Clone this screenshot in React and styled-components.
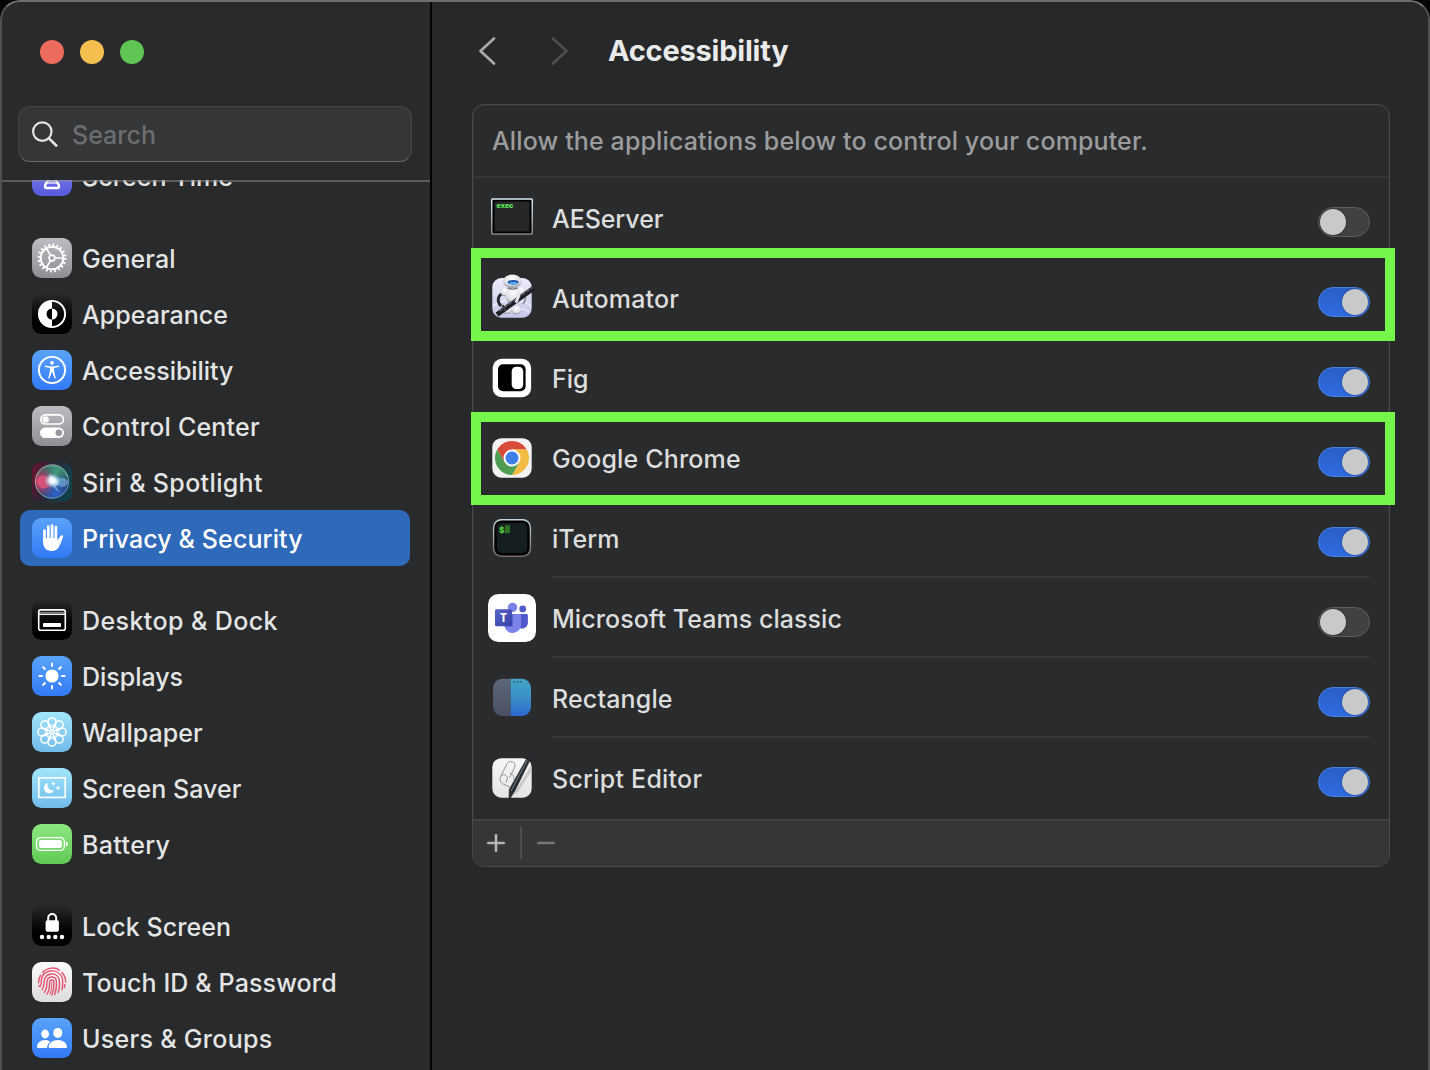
import React from "react";
import styled, { createGlobalStyle, css } from "styled-components";

const GlobalStyle = createGlobalStyle`
  *, *::before, *::after { box-sizing: border-box; }
  body {
    margin: 0;
    background: #050505;
    overflow: hidden;
    font-family: Inter, "Liberation Sans", sans-serif;
  }
`;

const Window = styled.div`
  position: relative;
  display: flex;
  width: 1430px;
  height: 1070px;
  overflow: hidden;
  border-radius: 20px 20px 0 0;
  background: #27282a;

  &::after {
    content: "";
    position: absolute;
    inset: 0;
    border: 2px solid #4f5052;
    border-top-color: #6d6e70;
    border-bottom: 0;
    border-radius: 20px 20px 0 0;
    pointer-events: none;
  }
`;

const Sidebar = styled.aside`
  display: flex;
  flex-direction: column;
  flex: none;
  width: 432px;
  height: 100%;
  border-right: 2px solid #000;
  background: #292a2c;
`;

const SidebarHeader = styled.div`
  display: flex;
  flex-direction: column;
  flex: none;
  gap: 42px;
  height: 180px;
  padding: 40px 18px 0;
`;

const TrafficLights = styled.div`
  display: flex;
  gap: 16px;
  padding-left: 22px;
`;

const Light = styled.span`
  width: 24px;
  height: 24px;
  border-radius: 50%;
  background: ${(p) => p.$color};
`;

const SearchField = styled.div`
  display: flex;
  align-items: center;
  gap: 14px;
  height: 56px;
  padding: 0 13px;
  border: 1px solid #454648;
  border-bottom-color: #6a6b6d;
  border-radius: 12px;
  background: #353638;
  color: #6c6d6f;
`;

const ListViewport = styled.div`
  position: relative;
  flex: 1;
  overflow: hidden;

  &::after {
    content: "";
    position: absolute;
    inset: 0 0 auto 0;
    height: 2px;
    background: rgba(140, 142, 144, 0.5);
  }
`;

const NavList = styled.nav`
  display: flex;
  flex-direction: column;
  gap: 26px;
  margin-top: -32px;
  padding: 0 20px;
`;

const NavGroup = styled.div`
  display: flex;
  flex-direction: column;
`;

const NavItem = styled.div`
  display: flex;
  align-items: center;
  gap: 10px;
  height: 56px;
  padding-left: 12px;
  border-radius: 10px;
  color: ${(p) => (p.$active ? "#ffffff" : "#e4e5e5")};
  background: ${(p) => (p.$active ? "#2f69ba" : "transparent")};
`;

const Label = styled.span`
  padding-top: 2px;
  white-space: nowrap;
  font-size: 25px;
  font-weight: 450;
  line-height: 32px;
  letter-spacing: ${(p) => p.$track || 0}px;
`;

const Main = styled.main`
  flex: 1;
  display: flex;
  flex-direction: column;
  min-width: 0;
  padding: 0 40px 0 40px;
`;

const TitleBar = styled.header`
  display: flex;
  align-items: center;
  height: 104px;
  padding: 0 0 2px 6px;
`;

const Title = styled.h1`
  margin: 0 0 1px 39px;
  color: #e9eaea;
  font-size: 29px;
  font-weight: 650;
  line-height: 36px;
  letter-spacing: -0.22px;
`;

const Chevron = styled.svg`
  flex: none;
  width: 18px;
  height: 30px;
  margin-right: ${(p) => p.$gap || 0}px;
  fill: none;
  stroke: ${(p) => p.$color};
  stroke-width: 2.7;
  stroke-linecap: round;
  stroke-linejoin: round;
`;

const Panel = styled.section`
  display: flex;
  flex-direction: column;
  width: 918px;
  height: 763px;
  border: 1px solid #48494b;
  border-radius: 12px;
  background: #2a2b2d;
  box-shadow: inset 0 0 0 1px #323335;
`;

const Description = styled.div`
  display: flex;
  align-items: center;
  height: 73px;
  padding: 0 0 2px 19px;
  border-bottom: 2px solid #343537;
  color: #9b9c9d;
`;

const AppRow = styled.div`
  position: relative;
  display: flex;
  align-items: center;
  height: ${(p) => (p.$last ? 81 : 80)}px;
  padding: ${(p) => (p.$last ? "0 19px 1px 15px" : "0 19px 0 15px")};
  color: #dcdddd;

  ${(p) =>
    p.$highlight !== undefined &&
    css`
      &::after {
        content: "";
        position: absolute;
        left: -2px;
        top: ${p.$highlight}px;
        width: 924px;
        height: 93px;
        border: 10px solid #74f64b;
        z-index: 2;
      }
    `}
`;

const AppIcon = styled.svg`
  flex: none;
  width: 48px;
  height: 48px;
`;

const AppBody = styled.div`
  display: flex;
  align-items: center;
  justify-content: space-between;
  flex: 1;
  height: 80px;
  margin-left: 16px;
  padding-top: 2px;
  border-bottom: 2px solid ${(p) => (p.$last ? "transparent" : "#353638")};
`;

const Switch = styled.span`
  display: flex;
  align-items: center;
  justify-content: ${(p) => (p.$on ? "flex-end" : "flex-start")};
  width: 52px;
  height: 30px;
  margin-top: 8px;
  padding: 0 1px;
  border: 1px solid ${(p) => (p.$on ? "#4a80e2" : "#5b5c5e")};
  border-radius: 15px;
  background: ${(p) => (p.$on ? "linear-gradient(#295fc6, #306be0)" : "#404143")};

  &::before {
    content: "";
    width: 26px;
    height: 26px;
    border-radius: 50%;
    background: #c8c9c9;
    box-shadow: 0 0 2px rgba(0, 0, 0, 0.5);
  }
`;

const PanelFooter = styled.footer`
  display: flex;
  align-items: center;
  flex: 1;
  padding-bottom: 2px;
  border-top: 2px solid #424345;
  border-radius: 0 0 11px 11px;
  background: #353638;
`;

const FooterButton = styled.span`
  display: flex;
  align-items: center;
  justify-content: center;
  width: ${(p) => p.$width}px;
  height: 32px;
  color: ${(p) => p.$color};
  padding-right: ${(p) => (p.$divided ? 1 : 0)}px;
  border-right: ${(p) => (p.$divided ? "2px solid #4d4e50" : "0")};
`;

/* ---------- sidebar icons ---------- */

const TileSvg = styled.svg`
  flex: none;
  width: 40px;
  height: 40px;
  overflow: visible;
`;

const TILES = {
  gray: ["#bdbcc1", "#929197"],
  black: ["#272829", "#000000"],
  blue: ["#5aa3f9", "#347cf6"],
  sky: ["#a2e6fa", "#72bdec"],
  green: ["#8ce681", "#62cc57"],
  white: ["#fbfbfb", "#dedede"],
  indigo: ["#8a86f7", "#5a5cde"],
};

function Tile({ tone, children }) {
  const [a, b] = TILES[tone];
  const id = "tile-" + tone;
  return (
    <TileSvg viewBox="0 0 40 40" fill="none" stroke="#fff">
      <defs>
        <linearGradient id={id} x1="0" y1="0" x2="0" y2="1">
          <stop offset="0" stopColor={a} />
          <stop offset={tone === "black" ? "0.65" : "0.95"} stopColor={b} />
        </linearGradient>
      </defs>
      <rect width="40" height="40" rx="9.5" fill={`url(#${id})`} stroke="none" />
      {children}
    </TileSvg>
  );
}

const ScreenTimeIcon = () => (
  <Tile tone="indigo">
    <path
      d="M13 8h14M14.500 8c0 7 4 9 4 12s-5.500 6-5.500 10.500c0 1.200.6 1.500 1.500 1.500h11c.9 0 1.500-.3 1.500-1.500 0-4.500-5.500-7.500-5.500-10.500s4-5 4-12"
      strokeWidth="2.400"
      strokeLinecap="round"
      strokeLinejoin="round"
    />
    <path d="M20 20.500c-1 4-4 5-5.500 7.500h11c-1.500-2.500-4.500-3.500-5.500-7.500z" fill="#fff" stroke="none" opacity="0.600" />
  </Tile>
);

const GearIcon = () => (
  <Tile tone="gray">
    <circle cx="20" cy="20" r="11.300" strokeWidth="1.900" />
    <circle cx="20" cy="20" r="13.300" strokeWidth="2.300" strokeDasharray="1.900 2.278" />
    <circle cx="20" cy="20" r="2.900" strokeWidth="1.600" />
    <path d="M23 20h8.500M18.500 17.400l-4.300-7.400M18.500 22.600l-4.300 7.400" strokeWidth="1.700" />
  </Tile>
);

const AppearanceIcon = () => (
  <Tile tone="black">
    <circle cx="20" cy="20" r="13.100" strokeWidth="1.900" />
    <path d="M20 7a13 13 0 0 0 0 26z" fill="#fff" stroke="none" />
    <path d="M20 14.500a5.500 5.500 0 0 0 0 11z" fill="#000" stroke="none" />
    <path d="M20 14.500a5.500 5.500 0 0 1 0 11z" fill="#fff" stroke="none" />
  </Tile>
);

const AccessibilityIcon = () => (
  <Tile tone="blue">
    <circle cx="20" cy="20" r="13.100" strokeWidth="1.900" />
    <circle cx="20" cy="12.800" r="1.900" fill="#fff" stroke="none" />
    <path d="M13.500 16.200l4.900 1h3.200l4.900-1" strokeWidth="1.600" strokeLinecap="round" strokeLinejoin="round" />
    <path d="M17.900 16.800h4.200v4.200l1.700 7.200-1.300.4-2.300-6.600h-.4l-2.300 6.600-1.300-.4 1.700-7.200z" fill="#fff" stroke="none" />
  </Tile>
);

const ControlCenterIcon = () => (
  <Tile tone="gray">
    <rect x="8.800" y="8.800" width="22.600" height="9.200" rx="4.600" strokeWidth="1.700" />
    <circle cx="13.600" cy="13.400" r="3.200" fill="#fff" stroke="none" />
    <rect x="8" y="21.500" width="24" height="10.600" rx="5.300" fill="#fff" stroke="none" />
    <circle cx="26.800" cy="26.800" r="3.300" fill="#97969b" stroke="none" />
  </Tile>
);

const SiriIcon = () => (
  <TileSvg viewBox="0 0 40 40">
    <defs>
      <linearGradient id="siri-bg" x1="0" y1="0" x2="1" y2="0.3">
        <stop offset="0" stopColor="#6b1430" />
        <stop offset="0.45" stopColor="#2b2336" />
        <stop offset="1" stopColor="#124049" />
      </linearGradient>
      <radialGradient id="siri-green" cx="0.62" cy="0.2" r="0.6">
        <stop offset="0" stopColor="#3f9d7e" />
        <stop offset="1" stopColor="#3f9d7e" stopOpacity="0" />
      </radialGradient>
      <radialGradient id="siri-pink" cx="0.12" cy="0.5" r="0.5">
        <stop offset="0" stopColor="#d8456f" />
        <stop offset="1" stopColor="#d8456f" stopOpacity="0" />
      </radialGradient>
      <radialGradient id="siri-blue" cx="0.6" cy="0.85" r="0.6">
        <stop offset="0" stopColor="#2d64c8" />
        <stop offset="1" stopColor="#2d64c8" stopOpacity="0" />
      </radialGradient>
      <radialGradient id="siri-glow">
        <stop offset="0" stopColor="#fff" />
        <stop offset="0.35" stopColor="#eaf8fb" stopOpacity="0.95" />
        <stop offset="1" stopColor="#9bd0e8" stopOpacity="0" />
      </radialGradient>
      <linearGradient id="siri-ring" x1="0" y1="0" x2="1" y2="1">
        <stop offset="0" stopColor="#d87c8c" />
        <stop offset="0.5" stopColor="#79c9ac" />
        <stop offset="1" stopColor="#5a8fe0" />
      </linearGradient>
    </defs>
    <rect width="40" height="40" rx="9.500" fill="url(#siri-bg)" />
    <circle cx="20" cy="19.500" r="17" fill="#2a3050" />
    <circle cx="20" cy="19.500" r="17" fill="url(#siri-green)" />
    <circle cx="20" cy="19.500" r="17" fill="url(#siri-blue)" />
    <circle cx="20" cy="19.500" r="17" fill="url(#siri-pink)" />
    <path d="M21 20c5-5 11-6 15-1 0 7-9 8-15 1z" fill="#6fa8dc" opacity="0.700" />
    <path d="M5 20c1-8 9-9 16 0-6 9-14 8-16 0z" fill="#e4557f" opacity="0.750" />
    <path d="M20 18l8 13-9-8-3 8z" fill="#a9c8ff" opacity="0.600" />
    <path d="M17 12l5 3 5 5-2 4-8-3z" fill="#e6f8f4" opacity="0.500" />
    <ellipse cx="20.500" cy="18.500" rx="8.500" ry="7.500" fill="url(#siri-glow)" />
    <circle cx="20" cy="19.500" r="16.700" fill="none" stroke="url(#siri-ring)" strokeWidth="0.900" />
    <path d="M5 14A16 16 0 0 1 35 15" fill="none" stroke="#62b598" strokeWidth="0.700" />
  </TileSvg>
);

const HandIcon = () => (
  <Tile tone="blue">
    <path d="M12.500 12.500v10M16.300 8.700v12M20.100 7.700v12M23.900 9v13" strokeWidth="2.700" strokeLinecap="round" />
    <path
      d="M11.150 20h14.100v2.500l3.300-4.600c.9-1.200 2.900-.5 2.400 1.100-.9 2.700-1.800 5.400-3 8-1.600 3.700-3.800 6-8.100 6-5.500 0-8.700-3.300-8.700-9z"
      fill="#fff"
      stroke="none"
    />
  </Tile>
);

const DesktopIcon = () => (
  <Tile tone="black">
    <rect x="6.700" y="9.900" width="26.600" height="20.400" rx="2" strokeWidth="1.600" />
    <path d="M7 12.600h26" strokeWidth="1.400" opacity="0.450" />
    <path d="M7 14.300h26" strokeWidth="1.300" />
    <rect x="11" y="23" width="18" height="4" rx="0.800" fill="#fff" stroke="none" />
  </Tile>
);

const SunIcon = () => (
  <Tile tone="blue">
    <circle cx="20" cy="20" r="6.600" fill="#fff" stroke="none" />
    {[0, 45, 90, 135, 180, 225, 270, 315].map((a) => (
      <path key={a} d="M20 10v-2.600" strokeWidth="2" strokeLinecap="round" transform={`rotate(${a} 20 20)`} />
    ))}
  </Tile>
);

const FlowerIcon = () => (
  <Tile tone="sky">
    {[0, 45, 90, 135, 180, 225, 270, 315].map((a) => (
      <g key={a} transform={`rotate(${a} 20 20)`}>
        <path d="M17.500 16.500C17.200 14 16 12.500 16 9.900a4 4 0 0 1 8 0C24 12.500 22.800 14 22.500 16.500" strokeWidth="1.500" />
        <ellipse cx="20" cy="16" rx="1.700" ry="3" strokeWidth="0.900" />
      </g>
    ))}
  </Tile>
);

const ScreenSaverIcon = () => (
  <Tile tone="sky">
    <rect x="6.800" y="9.800" width="26.400" height="19.600" strokeWidth="1.600" />
    <path d="M15.800 14.900a5.300 5.300 0 1 0 6.300 7.300 5.400 5.400 0 0 1-6.300-7.300z" fill="#fff" stroke="none" />
    <path
      d="M21.300 13.300l.7 1.700 1.700.7-1.700.7-.7 1.700-.7-1.700-1.700-.7 1.700-.7zM26 17.300l.8 1.900 1.900.8-1.900.8-.8 1.900-.8-1.900-1.900-.8 1.900-.8z"
      fill="#fff"
      stroke="none"
    />
  </Tile>
);

const BatteryIcon = () => (
  <Tile tone="green">
    <rect x="4.600" y="13.600" width="27.800" height="12.800" rx="4.200" strokeWidth="1.400" />
    <rect x="7" y="16" width="23" height="8" rx="2.200" fill="#fff" stroke="none" />
    <path d="M34 17.600c2.600.8 2.600 4 0 4.800z" fill="#fff" stroke="none" />
  </Tile>
);

const LockIcon = () => (
  <Tile tone="black">
    <path d="M16.200 15v-3a4 4 0 0 1 8 0v3" strokeWidth="2" />
    <rect x="13.600" y="14.300" width="13.300" height="11.500" rx="1.800" fill="#fff" stroke="none" />
    {[10, 16.700, 23.300, 30].map((x) => (
      <circle key={x} cx={x} cy="31" r="2.200" fill="#fff" stroke="none" />
    ))}
  </Tile>
);

const FingerprintIcon = () => (
  <Tile tone="white">
    <g stroke="#e2536e" strokeWidth="1.400" strokeLinecap="round">
      <path d="M10.500 10.500C15.500 5 23.500 5 27.500 8.300M30 10.500c2.300 2.600 3.700 6 3.600 9.500" />
      <path d="M8.500 13.300c-1.500 2.500-2 5-1.900 7.500M7 23.500c.3.800.5 1.200.9 1.300 1.600-1.500 1.200-4 1.400-6C10 7.500 25 5.500 29.700 14.500c1.500 3 1.300 7.500.3 13.500M32.900 22.500l-.5 3" />
      <path d="M10 27.600c2.300-2.600 1.800-5.600 2.100-8.300C13 10.300 24.500 9.500 27 17c.9 3.500.4 9-.8 13.500" />
      <path d="M12.300 30.200c3-3.500 2.400-7.200 2.600-10.200.5-6.500 8.500-6.500 9.400-1 .6 4.500-.2 9.300-1.600 13.500" />
      <path d="M15 32.200c2.800-4 2.500-8.200 2.600-12 .3-3 4-3 4.300 0 .2 4.500-.4 8.800-2.200 13" />
      <path d="M19.800 20.500c0 4-.3 8-1.800 11.500" strokeWidth="1" />
    </g>
  </Tile>
);

const UsersIcon = () => (
  <Tile tone="blue">
    <ellipse cx="13.100" cy="16" rx="3.900" ry="4.400" fill="#fff" stroke="none" />
    <path d="M5 29c0-4 3.500-7 8-7 2.200 0 4 .6 5.200 1.700-2 1.400-3 3.700-3.100 6.300H6c-.7 0-1-.4-1-1z" fill="#fff" stroke="none" />
    <ellipse cx="25.800" cy="14.900" rx="4.500" ry="5" fill="#fff" stroke="none" />
    <path d="M16.600 28.800c0-3.800 4-6.900 9.200-6.900s9.200 3.100 9.200 6.900c0 .8-.4 1.200-1.200 1.200h-16c-.8 0-1.200-.4-1.200-1.200z" fill="#fff" stroke="none" />
  </Tile>
);

/* ---------- application icons ---------- */

const ExecIcon = () => (
  <AppIcon viewBox="0 0 48 48">
    <defs>
      <linearGradient id="exec-frame" x1="0" y1="0" x2="0" y2="1">
        <stop offset="0" stopColor="#d6e6ee" />
        <stop offset="1" stopColor="#858687" />
      </linearGradient>
    </defs>
    <rect x="3" y="4.200" width="42" height="36.600" rx="1.500" fill="url(#exec-frame)" />
    <rect x="4.500" y="5.800" width="39" height="33.500" fill="#000" />
    <rect x="6.500" y="7.500" width="35" height="30" fill="#262728" />
    <text x="8.500" y="14.300" fill="#66ee62" stroke="#66ee62" strokeWidth="0.200" fontFamily='"Liberation Mono", monospace' fontWeight="700" fontSize="7">
      exec
    </text>
  </AppIcon>
);

const AutomatorIcon = () => (
  <AppIcon viewBox="0 0 48 48">
    <defs>
      <linearGradient id="auto-bg" x1="0" y1="0" x2="0" y2="1">
        <stop offset="0" stopColor="#ececf9" />
        <stop offset="1" stopColor="#c6c6ea" />
      </linearGradient>
      <radialGradient id="auto-shell" cx="0.5" cy="0.3" r="0.7">
        <stop offset="0" stopColor="#fff" />
        <stop offset="0.7" stopColor="#dcdde2" />
        <stop offset="1" stopColor="#85868d" />
      </radialGradient>
    </defs>
    <rect x="4.300" y="4" width="39.400" height="39.700" rx="9" fill="url(#auto-bg)" />
    <path d="M5 32c10-8 28-8 38 0M8 38c9-6 24-6 33 0" fill="none" stroke="#fff" strokeWidth="1.200" opacity="0.700" />
    <ellipse cx="19" cy="35.500" rx="5" ry="4.500" fill="url(#auto-shell)" />
    <ellipse cx="28.500" cy="36" rx="4.500" ry="4.500" fill="url(#auto-shell)" />
    <path d="M15 19c-6 3-6 9-2 13" fill="none" stroke="#26272c" strokeWidth="2.800" />
    <path d="M36 19c2 2 2 8-1 11" fill="none" stroke="#8a8b93" strokeWidth="1.600" />
    <ellipse cx="17" cy="18" rx="4.500" ry="4.200" fill="url(#auto-shell)" />
    <ellipse cx="33" cy="17.500" rx="4.500" ry="4" fill="url(#auto-shell)" />
    <ellipse cx="25" cy="21.500" rx="7.500" ry="8.500" fill="url(#auto-shell)" />
    <path d="M19.500 13.800c3 1.500 7 1.500 10 0" fill="none" stroke="#6d6e76" strokeWidth="1.300" />
    <ellipse cx="24.300" cy="7.300" rx="9.300" ry="6.700" fill="url(#auto-shell)" />
    <ellipse cx="25.200" cy="8.300" rx="5.500" ry="2.400" fill="#2256a8" />
    <ellipse cx="25.500" cy="9.200" rx="4.200" ry="1.300" fill="#5fb0f2" />
    <path d="M9 40.500L46 14" stroke="#1e1f24" strokeWidth="4.800" />
    <path d="M11.500 37.200L44.500 13.600" stroke="#8a8c95" strokeWidth="0.900" strokeDasharray="4 1.500" />
    <path d="M31 21l-2.500 6.500" stroke="#e4e5ea" strokeWidth="3" strokeLinecap="round" />
    <path d="M15 32l2 4" stroke="#3a3b40" strokeWidth="2.500" strokeLinecap="round" />
  </AppIcon>
);

const FigIcon = () => (
  <AppIcon viewBox="0 0 48 48">
    <rect x="4.700" y="4.800" width="38.400" height="38.400" rx="9" fill="#fff" />
    <rect x="10" y="10.300" width="27.600" height="27" rx="5" fill="#000" />
    <rect x="23.700" y="12.700" width="11.500" height="22.300" rx="4.500" fill="#fff" />
  </AppIcon>
);

const ChromeIcon = () => (
  <AppIcon viewBox="0 0 48 48">
    <rect x="4.300" y="4.200" width="39.400" height="39.500" rx="9" fill="#f2f2f2" />
    <path d="M24 15.500h14.720A17 17 0 0 0 9.280 15.500L16.640 28.250z" fill="#d94a3a" />
    <path d="M31.360 28.250L24 41A17 17 0 0 0 38.720 15.500H24z" fill="#f2bd42" />
    <path d="M16.640 28.250L9.280 15.500A17 17 0 0 0 24 41l7.360-12.750z" fill="#4f9d52" />
    <circle cx="24" cy="24" r="8.500" fill="#fff" />
    <circle cx="24" cy="24" r="6.500" fill="#3f7ee8" />
  </AppIcon>
);

const ITermIcon = () => (
  <AppIcon viewBox="0 0 48 48">
    <defs>
      <linearGradient id="iterm-frame" x1="0" y1="0" x2="0" y2="1">
        <stop offset="0" stopColor="#c5d3da" />
        <stop offset="1" stopColor="#6f6d6d" />
      </linearGradient>
    </defs>
    <rect x="4.900" y="5" width="38.200" height="38" rx="8.500" fill="url(#iterm-frame)" />
    <rect x="6.300" y="6.400" width="35.400" height="35.200" rx="7.300" fill="#000" />
    <rect x="8.800" y="9" width="30.500" height="30" rx="5" fill="#151e21" />
    <text x="11" y="18.800" fill="#55cc40" stroke="#55cc40" strokeWidth="0.300" fontFamily='"Liberation Mono", monospace' fontWeight="700" fontSize="9">
      $
    </text>
    <rect x="17" y="11.200" width="4.800" height="8" fill="#2d7222" />
  </AppIcon>
);

const TeamsIcon = () => (
  <AppIcon viewBox="0 0 48 48">
    <defs>
      <linearGradient id="teams-tile" x1="0" y1="0" x2="1" y2="1">
        <stop offset="0" stopColor="#5a62c3" />
        <stop offset="1" stopColor="#3540ab" />
      </linearGradient>
    </defs>
    <rect width="48" height="48" rx="10.500" fill="#fff" />
    <circle cx="34.700" cy="14.900" r="3.400" fill="#5059c9" />
    <circle cx="24.500" cy="13.400" r="4.700" fill="#7b83eb" />
    <path d="M30 20h8.500c.8 0 1.400.6 1.400 1.400v7.100a6 6 0 0 1-9.900 4.500z" fill="#5059c9" />
    <path d="M16.300 20h15.300c.8 0 1.400.6 1.400 1.400v9.300a8.350 8.350 0 0 1-16.700 0z" fill="#7b83eb" />
    <path d="M16.300 20h8.700v12.500h-8.500z" fill="#5b63d0" />
    <rect x="7" y="15.200" width="17" height="17" rx="1.400" fill="url(#teams-tile)" />
    <text x="15.500" y="28" fill="#fff" textAnchor="middle" fontFamily='"Open Sans", sans-serif' fontWeight="700" fontSize="12">
      T
    </text>
  </AppIcon>
);

const RectangleIcon = () => (
  <AppIcon viewBox="0 0 48 48">
    <defs>
      <linearGradient id="rect-left" x1="0" y1="0" x2="0" y2="1">
        <stop offset="0" stopColor="#5c677a" />
        <stop offset="1" stopColor="#4a5062" />
      </linearGradient>
      <linearGradient id="rect-right" x1="0" y1="0" x2="0" y2="1">
        <stop offset="0" stopColor="#45a5c4" />
        <stop offset="0.5" stopColor="#3b8fc8" />
        <stop offset="1" stopColor="#2c68d0" />
      </linearGradient>
    </defs>
    <path d="M22.700 4.800H14a9 9 0 0 0-9 9V33a9 9 0 0 0 9 9h8.700z" fill="url(#rect-left)" />
    <path d="M22.700 4.800H34a9 9 0 0 1 9 9V33a9 9 0 0 1-9 9H22.700z" fill="url(#rect-right)" />
    <path d="M25 7.700h2.300M28.300 7.700h2.300M31.600 7.700h2.300" stroke="#2f6f8c" strokeWidth="1.500" />
  </AppIcon>
);

const ScriptEditorIcon = () => (
  <AppIcon viewBox="0 0 48 48">
    <defs>
      <linearGradient id="script-bg" x1="0" y1="0" x2="0" y2="1">
        <stop offset="0" stopColor="#f8f7f7" />
        <stop offset="1" stopColor="#e6e3e3" />
      </linearGradient>
    </defs>
    <rect x="4.300" y="4.200" width="39.400" height="39.500" rx="9" fill="url(#script-bg)" />
    <path
      d="M12.700 22.500l5.800-11.700c2-5.500 10.200-3.500 8.200 2.500l-5.200 10.500M12.800 22.300c2.200-2.500 5.400-2 6.700 1.500l-1.500 5M12.700 22.500c-1.100 2.500-.9 5.600 1.600 7.100l8.500 4M22 19.500c3 .5 5 2.500 3.500 6"
      fill="none"
      stroke="#8a898b"
      strokeWidth="0.900"
    />
    <path d="M43 11L25 41.500l5-3.500L43 18z" fill="#9b9899" opacity="0.400" />
    <path d="M39.300 3.600L41.300 1.800l1.400.9-.3 2.600L27 36.500l-5 8-1 .2.300-9.200z" fill="#2b3036" stroke="#16191c" strokeWidth="0.600" />
    <path d="M39.300 6L23 37" stroke="#77838c" strokeWidth="0.900" />
  </AppIcon>
);

/* ---------- data ---------- */

const NAV = [
  [{ icon: ScreenTimeIcon, label: "Screen Time", track: 0.06 }],
  [
    { icon: GearIcon, label: "General", track: 0.05 },
    { icon: AppearanceIcon, label: "Appearance", track: 0.04 },
    { icon: AccessibilityIcon, label: "Accessibility", track: -0.06 },
    { icon: ControlCenterIcon, label: "Control Center", track: 0.21 },
    { icon: SiriIcon, label: "Siri & Spotlight", track: 0.35 },
    { icon: HandIcon, label: "Privacy & Security", active: true, track: 0.11 },
  ],
  [
    { icon: DesktopIcon, label: "Desktop & Dock", track: 0.41 },
    { icon: SunIcon, label: "Displays", track: -0.02 },
    { icon: FlowerIcon, label: "Wallpaper", track: 0.05 },
    { icon: ScreenSaverIcon, label: "Screen Saver", track: 0.03 },
    { icon: BatteryIcon, label: "Battery", track: 0.36 },
  ],
  [
    { icon: LockIcon, label: "Lock Screen", track: 0.06 },
    { icon: FingerprintIcon, label: "Touch ID & Password", track: 0.13 },
    { icon: UsersIcon, label: "Users & Groups", track: 0.3 },
  ],
];

const APPS = [
  { icon: ExecIcon, label: "AEServer", on: false, track: -0.07 },
  { icon: AutomatorIcon, label: "Automator", on: true, highlight: -10, track: 0.18 },
  { icon: FigIcon, label: "Fig", on: true },
  { icon: ChromeIcon, label: "Google Chrome", on: true, highlight: -6, track: 0.17 },
  { icon: ITermIcon, label: "iTerm", on: true, track: -0.05 },
  { icon: TeamsIcon, label: "Microsoft Teams classic", on: false, track: 0.06 },
  { icon: RectangleIcon, label: "Rectangle", on: true, track: 0.15 },
  { icon: ScriptEditorIcon, label: "Script Editor", on: true, track: 0.23 },
];

export default function App() {
  return (
    <>
      <GlobalStyle />
      <Window>
        <Sidebar>
          <SidebarHeader>
            <TrafficLights>
              <Light $color="#ed6a5f" />
              <Light $color="#f5bf4f" />
              <Light $color="#61c555" />
            </TrafficLights>
            <SearchField>
              <svg width="26" height="26" viewBox="0 0 26 26" fill="none" stroke="#e4e5e5" strokeWidth="2.200" strokeLinecap="round">
                <circle cx="10.300" cy="10.600" r="9.200" />
                <path d="M17 17.300l7.200 7.200" strokeWidth="2.600" />
              </svg>
              <Label $track={0.02}>Search</Label>
            </SearchField>
          </SidebarHeader>
          <ListViewport>
            <NavList>
              {NAV.map((group, i) => (
                <NavGroup key={i}>
                  {group.map(({ icon: Icon, label, active, track }) => (
                    <NavItem key={label} $active={active}>
                      <Icon />
                      <Label $track={track}>{label}</Label>
                    </NavItem>
                  ))}
                </NavGroup>
              ))}
            </NavList>
          </ListViewport>
        </Sidebar>
        <Main>
          <TitleBar>
            <Chevron viewBox="0 0 18 30" $color="#a9aaab" $gap={55}>
              <path d="M16 2.500L2.500 15 16 27.500" />
            </Chevron>
            <Chevron viewBox="0 0 18 30" $color="#4c4d4f">
              <path d="M2 2.500L15.500 15 2 27.500" />
            </Chevron>
            <Title>Accessibility</Title>
          </TitleBar>
          <Panel>
            <Description>
              <Label $track={0.125}>Allow the applications below to control your computer.</Label>
            </Description>
            {APPS.map(({ icon: Icon, label, on, highlight, track }, i) => (
              <AppRow key={label} $highlight={highlight} $last={i === APPS.length - 1}>
                <Icon />
                <AppBody $last={i === APPS.length - 1}>
                  <Label $track={track}>{label}</Label>
                  <Switch $on={on} />
                </AppBody>
              </AppRow>
            ))}
            <PanelFooter>
              <FooterButton $width={49} $color="#b4b5b6" $divided>
                <svg width="18" height="18" viewBox="0 0 18 18" stroke="currentColor" strokeWidth="2.600" strokeLinecap="round">
                  <path d="M9 1.300v15.400M1.300 9h15.400" />
                </svg>
              </FooterButton>
              <FooterButton $width={48} $color="#77787a">
                <svg width="18" height="18" viewBox="0 0 18 18" stroke="currentColor" strokeWidth="2.600" strokeLinecap="round">
                  <path d="M1.300 9h15.400" />
                </svg>
              </FooterButton>
            </PanelFooter>
          </Panel>
        </Main>
      </Window>
    </>
  );
}
